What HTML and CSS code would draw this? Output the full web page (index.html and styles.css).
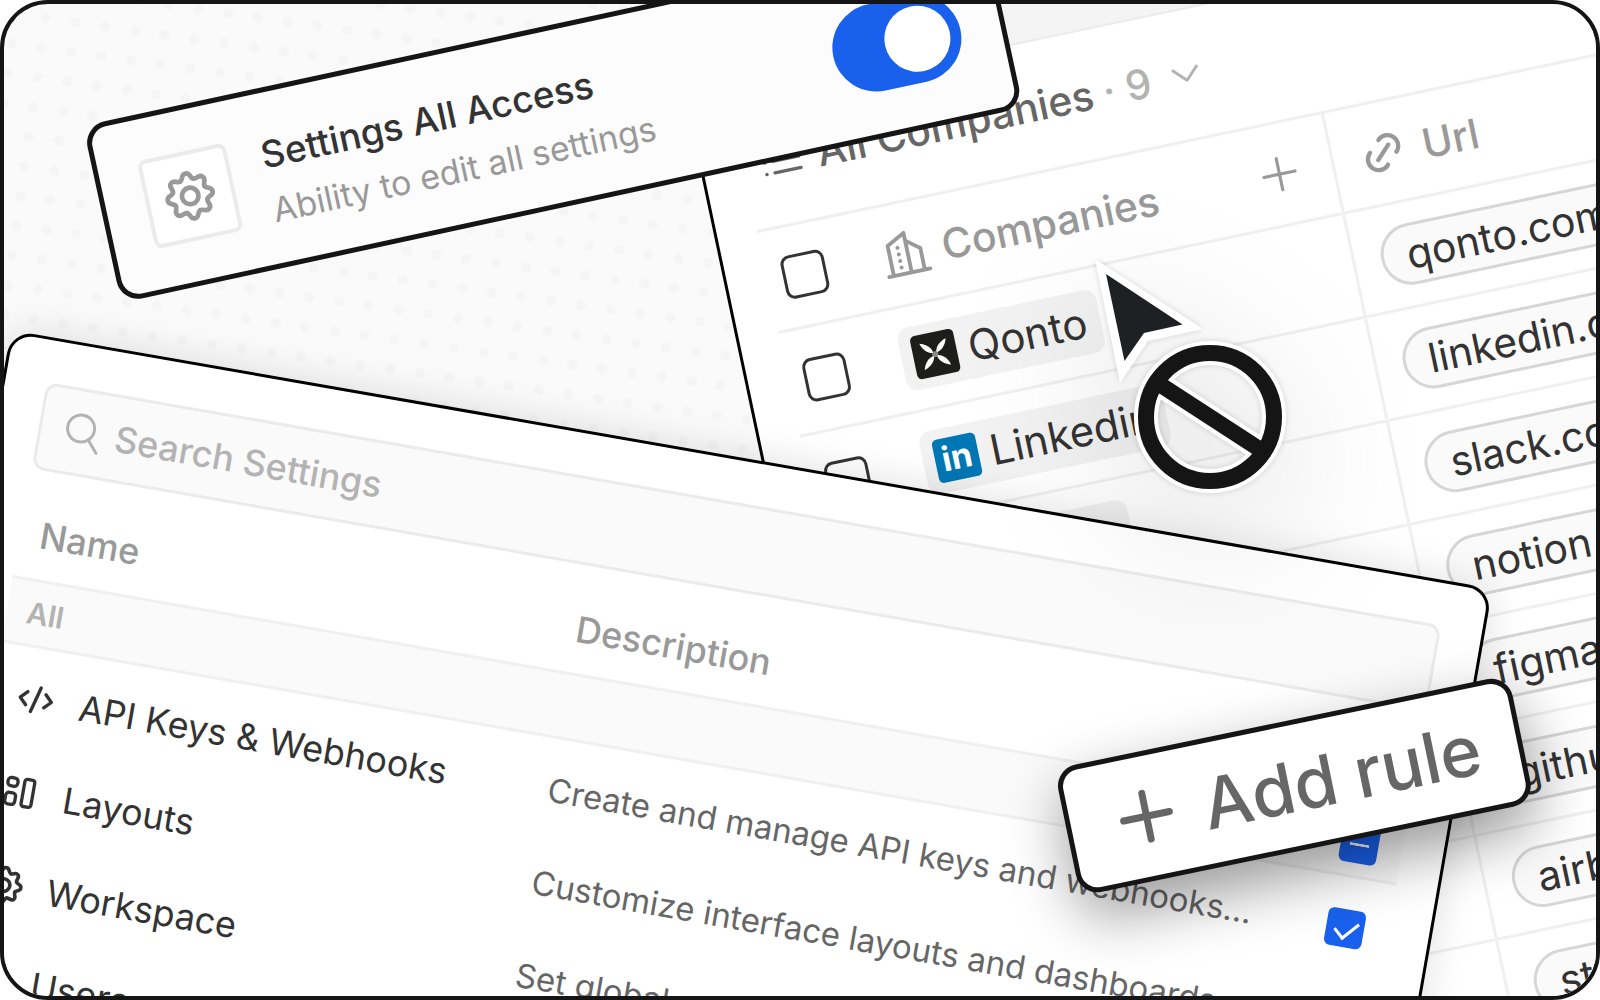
FILE: index.html
```html
<!DOCTYPE html>
<html lang="en">
<head>
  <meta charset="UTF-8">
  <meta name="viewport" content="width=device-width, initial-scale=1.0">
  <title>Permissions</title>

  <link rel="stylesheet" href="styles.css">
</head>
<body>
  <!-- shared icons -->
  <svg class="defs" width="0" height="0" aria-hidden="true">
    <defs>
      <path id="tooth" d="M-2.83 -6.84C-1.3 -7.6 -2.1 -9.7 0 -9.7S1.300 -7.600 2.830 -6.840"/>
    </defs>
    <symbol id="gear" viewBox="-11 -11 22 22">
      <use href="#tooth"/>
      <use href="#tooth" transform="rotate(45)"/>
      <use href="#tooth" transform="rotate(90)"/>
      <use href="#tooth" transform="rotate(135)"/>
      <use href="#tooth" transform="rotate(180)"/>
      <use href="#tooth" transform="rotate(225)"/>
      <use href="#tooth" transform="rotate(270)"/>
      <use href="#tooth" transform="rotate(315)"/>
      <circle r="3.5"/>
    </symbol>
    <symbol id="plus" viewBox="0 0 24 24">
      <path d="M12 2v20M2 12h20"/>
    </symbol>
  </svg>

  <main class="frame">
    <!-- companies table -->
    <section class="window companies">
      <div class="topbar"></div>
      <button class="view">
        <svg class="icon list" viewBox="0 0 24 24"><path d="M7 5h16M7 12h16M7 19h16M2 5h.1M2 12h.1M2 19h.1"/></svg>
        <span>All Companies</span>
        <span class="count">· 9</span>
        <svg class="icon chevron" viewBox="0 0 24 24"><path d="M4 8l8 8 8-8"/></svg>
      </button>
      <table class="grid">
        <thead>
          <tr>
            <th class="pick"><input class="check" type="checkbox" aria-label="Select all"></th>
            <th class="company">
              <div class="label">
                <svg class="icon building" viewBox="0 0 24 24"><path d="M1 22.500h22M3.500 22.500V6.500L13 1.500v21M13.500 6L20 11v11.500"/><path class="dots" d="M8.300 8.500h.1M8.300 12h.1M8.300 15.500h.1M8.300 19h.1"/></svg>
                <span>Companies</span>
                <button class="new" aria-label="Add company"><svg class="icon"><use href="#plus"/></svg></button>
              </div>
            </th>
            <th class="url">
              <div class="label">
                <svg class="icon link" viewBox="0 0 24 24"><path d="M9 15l6-6M11 6l.5-.5a5 5 0 0 1 7 7L18 13M13 18l-.4.500a5 5 0 0 1-7.100-7L6 11"/></svg>
                <span>Url</span>
              </div>
            </th>
          </tr>
        </thead>
        <tbody>
          <tr>
            <td class="pick"><input class="check" type="checkbox" aria-label="Select Qonto"></td>
            <td class="company"><a class="chip" href="#"><svg class="logo qonto" viewBox="0 0 44 44"><g transform="translate(22 22) rotate(45)"><path d="M0 -2C-4 -7 -3 -14 0 -19C3 -14 4 -7 0 -2zM0 2C-4 7 -3 14 0 19C3 14 4 7 0 2zM-2 0C-7 -4 -14 -3 -19 0C-14 3 -7 4 -2 0zM2 0C7 -4 14 -3 19 0C14 3 7 4 2 0z"/><circle r="3"/></g></svg>Qonto</a></td>
            <td class="url"><a class="pill" href="#">qonto.com</a></td>
          </tr>
          <tr>
            <td class="pick"><input class="check" type="checkbox" aria-label="Select Linkedin"></td>
            <td class="company"><a class="chip" href="#"><b class="logo linkedin">in</b>Linkedin</a></td>
            <td class="url"><a class="pill" href="#">linkedin.com</a></td>
          </tr>
          <tr>
            <td class="pick"><input class="check" type="checkbox" aria-label="Select Slack"></td>
            <td class="company"><a class="chip" href="#"><b class="logo"></b>Slack</a></td>
            <td class="url"><a class="pill" href="#">slack.com</a></td>
          </tr>
          <tr>
            <td class="pick"></td>
            <td class="company"></td>
            <td class="url"><a class="pill" href="#">notion.com</a></td>
          </tr>
          <tr>
            <td class="pick"></td>
            <td class="company"></td>
            <td class="url"><a class="pill" href="#">figma.com</a></td>
          </tr>
          <tr>
            <td class="pick"></td>
            <td class="company"></td>
            <td class="url"><a class="pill" href="#">github.com</a></td>
          </tr>
          <tr>
            <td class="pick"></td>
            <td class="company"></td>
            <td class="url"><a class="pill" href="#">airbnb.com</a></td>
          </tr>
          <tr>
            <td class="pick"></td>
            <td class="company"></td>
            <td class="url"><a class="pill" href="#">stripe.com</a></td>
          </tr>
        </tbody>
      </table>
    </section>

    <!-- settings permissions -->
    <section class="window settings">
      <label class="search">
        <svg class="icon" viewBox="0 0 40 40"><circle cx="17" cy="16" r="13.500"/><path d="M26 26l10 12"/></svg>
        <input type="text" placeholder="Search Settings" aria-label="Search Settings">
      </label>
      <table class="rules">
        <thead>
          <tr>
            <th class="name">Name</th>
            <th>Description</th>
            <th class="state"></th>
          </tr>
        </thead>
        <tbody>
          <tr class="group">
            <th class="name">All</th>
            <td></td>
            <td class="state"><input class="tick some" type="checkbox" aria-label="All settings"></td>
          </tr>
          <tr class="spacer"><td colspan="3"></td></tr>
          <tr>
            <td class="name"><div class="label"><svg class="icon" viewBox="0 0 24 24"><path d="M6.500 8L2.500 12l4 4M17.500 8l4 4-4 4M14 4.500l-4 15"/></svg>API Keys &amp; Webhooks</div></td>
            <td class="text">Create and manage API keys and webhooks...</td>
            <td class="state"><input class="tick" type="checkbox" checked aria-label="API Keys and Webhooks"></td>
          </tr>
          <tr>
            <td class="name"><div class="label"><svg class="icon" viewBox="0 0 24 24"><rect x="4" y="4" width="6" height="5" rx="2"/><rect x="4" y="13" width="6" height="7" rx="2"/><rect x="14" y="3.500" width="6" height="16.500" rx="1.500"/></svg>Layouts</div></td>
            <td class="text">Customize interface layouts and dashboards</td>
            <td class="state"><input class="tick" type="checkbox" checked aria-label="Layouts"></td>
          </tr>
          <tr>
            <td class="name"><div class="label"><svg class="icon"><use href="#gear"/></svg>Workspace</div></td>
            <td class="text">Set global workspace preferences</td>
            <td class="state"></td>
          </tr>
          <tr>
            <td class="name"><div class="label"><svg class="icon"></svg>Users</div></td>
            <td class="text"></td>
            <td class="state"></td>
          </tr>
        </tbody>
      </table>
    </section>

    <!-- all access card -->
    <section class="access">
      <div class="badge"><svg class="icon"><use href="#gear"/></svg></div>
      <label class="about" for="all-access">
        <span class="title">Settings All Access</span>
        <span class="hint">Ability to edit all settings</span>
      </label>
      <input class="toggle" id="all-access" type="checkbox" role="switch" checked>
    </section>

    <button class="add-rule">
      <svg class="icon"><use href="#plus"/></svg>
      Add rule
    </button>

    <svg class="cursor" viewBox="0 0 200 250" aria-hidden="true">
      <path class="arrow-rim" d="M15 9L123 79L68 91L40 133z"/>
      <path class="arrow" d="M26 24L102.500 74.500L64 83L44.500 111z"/>
      <g class="rim">
        <circle cx="130" cy="167" r="64"/>
        <path d="M76.300 132.100l107.400 69.800"/>
      </g>
      <g class="ban">
        <circle cx="130" cy="167" r="64"/>
        <path d="M76.300 132.100l107.400 69.800"/>
      </g>
    </svg>
  </main>
</body>
</html>
```
FILE: styles.css
```css
* {
  box-sizing: border-box;
}

body {
  margin: 0;
  background: #fff;
  font-family: Inter, "Liberation Sans", sans-serif;
  color: #333;
}

button {
  padding: 0;
  border: 0;
  background: none;
  font: inherit;
  color: inherit;
  cursor: pointer;
}

a {
  color: inherit;
  text-decoration: none;
}

table {
  border-spacing: 0;
}

th, td {
  padding: 0;
  text-align: left;
  font-weight: 400;
}

input {
  margin: 0;
  font: inherit;
}

.defs {
  position: absolute;
}

.icon {
  flex: none;
  width: 40px;
  height: 40px;
  fill: none;
  stroke: currentColor;
  stroke-width: 2;
  stroke-linecap: round;
  stroke-linejoin: round;
}

.frame {
  position: relative;
  height: 100vh;
  overflow: hidden;
  border: 4px solid #151515;
  border-radius: 48px;
  background: #fafafa;
}

/* tilted dots behind the windows */
.frame::before {
  content: '';
  position: absolute;
  top: -300px;
  left: -300px;
  width: 1500px;
  height: 1500px;
  background: radial-gradient(circle, #f5f5f5 4px, transparent 6px) 0 0 / 30px 30px;
  transform: rotate(8deg);
}

.window {
  position: absolute;
  border: 3px solid #000;
  background: #fff;
  transform-origin: 0 0;
}

.label {
  display: flex;
  align-items: center;
}

/* companies */
.companies {
  top: 56px;
  left: 673px;
  width: 75vw;
  transform: rotate(-11.9deg);
  font-size: 41px;
  line-height: 48px;
}

.topbar {
  height: 52px;
  border-bottom: 2px solid #ebebeb;
  background: #f4f4f4;
}

.view {
  display: flex;
  align-items: center;
  width: 100%;
  height: 128px;
  padding-left: 58px;
  color: #666;
  font-weight: 500;
}

.view .list {
  margin-right: 17px;
}

.view .count {
  margin: 0 18px 0 10px;
  color: #b3b3b3;
}

.view .chevron {
  width: 36px;
  height: 36px;
  color: #b3b3b3;
}

.grid {
  width: 100%;
  padding-left: 40px;
  table-layout: fixed;
}

.grid th, .grid td {
  height: 106px;
  border-bottom: 3px solid #f0f0f0;
}

.grid th {
  border-top: 3px solid #f0f0f0;
  color: #999;
  font-weight: 500;
}

.grid .pick {
  width: 115px;
  padding-left: 16px;
}

.grid .company {
  width: 464px;
  border-right: 3px solid #f0f0f0;
}

.grid .url {
  padding-left: 26px;
}

.grid .building {
  width: 46px;
  height: 46px;
  margin: 0 14px 0 3px;
}

.grid .link {
  width: 52px;
  height: 52px;
  margin: 0 14px 0 -2px;
}

.grid .new {
  display: flex;
  margin-left: auto;
  padding-right: 34px;
}

.grid .new .icon {
  width: 38px;
  height: 38px;
}

.check {
  display: block;
  width: 44px;
  height: 44px;
  border: 3px solid #333;
  border-radius: 9px;
  background: #fff;
  appearance: none;
}

.chip {
  display: inline-flex;
  align-items: center;
  gap: 12px;
  height: 64px;
  padding: 0 14px 0 12px;
  border-radius: 12px;
  background: #f2f2f2;
  font-size: 42px;
  vertical-align: middle;
}

.logo {
  width: 44px;
  height: 44px;
  border-radius: 5px;
}

.qonto {
  background: #1d1d1b;
  fill: #fff;
}

.qonto circle {
  fill: #888;
}

.linkedin {
  background: #0077b5;
  color: #fff;
  font-size: 34px;
  line-height: 42px;
  text-align: center;
}

.pill {
  display: inline-flex;
  align-items: center;
  height: 62px;
  padding: 0 23px;
  border: 3px solid #d6d6d6;
  border-radius: 31px;
  background: #fafafa;
  vertical-align: middle;
}

/* settings */
.settings {
  top: 326px;
  left: 7px;
  width: 94vw;
  height: 900px;
  padding: 42px 41px;
  border-radius: 24px;
  box-shadow: 0 0 40px rgba(0,0,0,0.13);
  transform: rotate(9.9deg);
  font-size: 36px;
  line-height: 44px;
}

.search {
  display: flex;
  align-items: center;
  gap: 12px;
  height: 88px;
  padding: 0 22px;
  border: 3px solid #ebebeb;
  border-radius: 12px;
  background: #fafafa;
  color: #b3b3b3;
}

.search .icon {
  stroke-width: 3;
}

.search input {
  flex: 1;
  min-width: 0;
  padding: 0;
  border: 0;
  outline: 0;
  background: none;
  font-weight: 500;
}

.search input::placeholder {
  color: #b3b3b3;
}

.rules {
  width: 100%;
  margin-top: 20px;
  table-layout: fixed;
}

.rules th, .rules td {
  height: 94px;
  padding-left: 26px;
}

.rules thead th {
  height: 88px;
  color: #999;
  font-weight: 500;
}

.rules .name {
  width: 38%;
  padding-left: 24px;
}

.rules th.name {
  padding-left: 20px;
}

.rules .state {
  width: 86px;
  padding-left: 24px;
}

.rules .group th, .rules .group td {
  height: 68px;
  border-top: 3px solid #f0f0f0;
  border-bottom: 3px solid #f0f0f0;
  background: #fafafa;
  color: #b3b3b3;
  font-size: 30px;
  font-weight: 600;
}

.rules .spacer td {
  height: 4px;
}

.rules .label {
  gap: 24px;
}

.rules .text {
  color: #666;
  font-size: 33px;
  white-space: nowrap;
}

.tick {
  display: block;
  position: relative;
  width: 38px;
  height: 38px;
  border-radius: 6px;
  background: #1961ed;
  appearance: none;
}

.tick::after {
  content: '';
  position: absolute;
  top: 11px;
  left: 9px;
  width: 20px;
  height: 11px;
  border-left: 3px solid #fff;
  border-bottom: 3px solid #fff;
  transform: rotate(-48deg);
}

.tick.some::after {
  top: 18px;
  height: 0;
  border-left: 0;
  border-radius: 2px;
  transform: none;
}

/* access card */
.access {
  position: absolute;
  top: 122px;
  left: 79px;
  display: flex;
  align-items: center;
  width: 57.7vw;
  height: 181px;
  padding: 0 40px 0 40px;
  border: 5px solid #151515;
  border-radius: 22px;
  background: #fcfcfc;
  transform: rotate(-12.2deg);
  transform-origin: 0 0;
}

.badge {
  display: flex;
  align-items: center;
  justify-content: center;
  width: 90px;
  height: 90px;
  margin-right: 33px;
  border: 4px solid #ebebeb;
  border-radius: 8px;
  background: #fff;
  color: #999;
}

.badge .icon {
  width: 52px;
  height: 52px;
}

.about {
  flex: 1;
  padding-top: 8px;
  line-height: 56px;
}

.about span {
  display: block;
}

.title {
  font-size: 37px;
  font-weight: 500;
}

.hint {
  color: #999;
  font-size: 34px;
}

.toggle {
  position: relative;
  width: 130px;
  height: 88px;
  border-radius: 44px;
  background: #1961ed;
  appearance: none;
}

.toggle::after {
  content: '';
  position: absolute;
  top: 11px;
  right: 11px;
  width: 66px;
  height: 66px;
  border-radius: 50%;
  background: #fff;
}

/* add rule */
.add-rule {
  position: absolute;
  top: 765px;
  left: 1050px;
  display: flex;
  align-items: center;
  gap: 30px;
  height: 130px;
  padding: 0 38px 0 48px;
  border: 5px solid #151515;
  border-radius: 22px;
  background: #fff;
  box-shadow: 0 24px 60px rgba(0,0,0,0.4);
  transform: rotate(-11.7deg);
  transform-origin: 0 0;
  color: #666;
  font-size: 70px;
  font-weight: 500;
  white-space: nowrap;
}

.add-rule .icon {
  width: 56px;
  height: 56px;
  stroke-width: 3;
}

/* cursor with the not-allowed sign */
.cursor {
  position: absolute;
  top: 246px;
  left: 1076px;
  width: 200px;
  height: 250px;
  overflow: visible;
  fill: none;
  filter: drop-shadow(0 0 3px rgba(0,0,0,0.15)) drop-shadow(0 40px 70px rgba(0,0,0,0.18));
}

.arrow-rim {
  fill: #fff;
}

.arrow {
  fill: #1f2024;
}

.rim {
  stroke: #fff;
  stroke-width: 24;
}

.ban {
  stroke: #151515;
  stroke-width: 16;
}
```
